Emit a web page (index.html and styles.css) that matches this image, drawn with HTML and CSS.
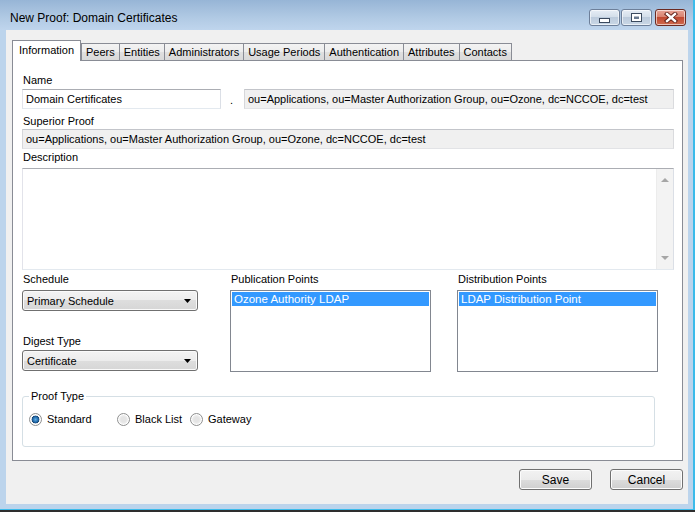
FILE: index.html
```html
<!DOCTYPE html>
<html lang="en">
  <head>
    <meta charset="UTF-8" />
    <meta name="viewport" content="width=device-width, initial-scale=1.0" />
    <title>New Proof: Domain Certificates</title>
    <link rel="stylesheet" href="styles.css">
  </head>
  <body>
    <div class="window">
      <div class="titlebar">
        <span class="title">New Proof: Domain Certificates</span>
        <div class="caption">
          <button class="cap" type="button">
            <svg width="11" height="5" viewBox="0 0 11 5"><rect x="0.5" y="0.5" width="10" height="4" fill="#fff" stroke="#3b4a5e"/></svg>
          </button>
          <button class="cap cap-max" type="button">
            <svg width="11" height="9" viewBox="0 0 11 9"><rect x="0.5" y="0.5" width="10" height="8" fill="#fff" stroke="#3b4a5e"/><rect x="3" y="3.5" width="5" height="2.5" fill="#6a7a90"/></svg>
          </button>
          <button class="cap cap-close" type="button">
            <svg width="14" height="11" viewBox="0 0 14 11"><path d="M3 2 L11 9 M11 2 L3 9" stroke="#5a1a12" stroke-width="4.2" stroke-linecap="square"/><path d="M3 2 L11 9 M11 2 L3 9" stroke="#fff" stroke-width="2.4" stroke-linecap="square"/></svg>
          </button>
        </div>
      </div>

      <div class="client">
        <div class="tabs">
          <div class="tab active">Information</div>
          <div class="tab">Peers</div>
          <div class="tab">Entities</div>
          <div class="tab">Administrators</div>
          <div class="tab">Usage Periods</div>
          <div class="tab">Authentication</div>
          <div class="tab">Attributes</div>
          <div class="tab">Contacts</div>
        </div>

        <div class="panel">
          <div class="lbl">Name</div>
          <div class="name-row">
            <div class="input name-input">Domain Certificates</div>
            <div class="dot">.</div>
            <div class="input readonly">ou=Applications, ou=Master Authorization Group, ou=Ozone, dc=NCCOE, dc=test</div>
          </div>

          <div class="lbl gap-top">Superior Proof</div>
          <div class="input readonly superior">ou=Applications, ou=Master Authorization Group, ou=Ozone, dc=NCCOE, dc=test</div>

          <div class="lbl desc-lbl">Description</div>
          <div class="desc">
            <div class="vscroll">
              <span class="arrow-up"></span>
              <span class="arrow-down"></span>
            </div>
          </div>

          <div class="options">
            <div class="col">
              <div class="lbl">Schedule</div>
              <div class="combo">
                <span>Primary Schedule</span>
                <svg width="8" height="4" viewBox="0 0 8 4"><path d="M0 0 H7 L3.5 4 Z" fill="#000"/></svg>
              </div>
              <div class="lbl digest-lbl">Digest Type</div>
              <div class="combo combo-digest">
                <span>Certificate</span>
                <svg width="8" height="4" viewBox="0 0 8 4"><path d="M0 0 H7 L3.5 4 Z" fill="#000"/></svg>
              </div>
            </div>
            <div class="col">
              <div class="lbl">Publication Points</div>
              <div class="listbox">
                <div class="item selected">Ozone Authority LDAP</div>
              </div>
            </div>
            <div class="col">
              <div class="lbl">Distribution Points</div>
              <div class="listbox">
                <div class="item selected">LDAP Distribution Point</div>
              </div>
            </div>
          </div>

          <fieldset class="group">
            <legend>Proof Type</legend>
            <div class="radios">
              <label class="opt opt-std"><input type="radio" name="ptype" checked /> Standard</label>
              <label class="opt opt-black"><input type="radio" name="ptype" /> Black List</label>
              <label class="opt"><input type="radio" name="ptype" /> Gateway</label>
            </div>
          </fieldset>
        </div>

        <div class="actions">
          <button class="btn" type="button">Save</button>
          <button class="btn" type="button">Cancel</button>
        </div>
      </div>
    </div>
  </body>
</html>
```

FILE: styles.css
```css
body {
  margin: 0;
  background-color: #2e2e2e;
  font-family: "Liberation Sans", Arial, sans-serif;
  font-size: 11px;
  color: #000;
}

.window {
  width: 693px;
  height: 509px;
  background-color: #bcd4ec;
  border-right: 2px solid #3cbbea;
  border-bottom: 1px solid #3cbbea;
}

/* title bar */
.titlebar {
  height: 30px;
  display: flex;
  background: linear-gradient(#97b5d6, #b1cae4 60%, #bfd5ed);
}

.title {
  flex: 1;
  padding: 11px 0 0 10px;
  font-size: 12px;
  line-height: 14px;
}

.caption {
  display: flex;
  margin: 9px 7px 0 0;
}

.cap {
  width: 31px;
  height: 17px;
  padding: 0;
  margin-left: 1px;
  border: 1px solid #6d7f99;
  border-radius: 3px;
  background: linear-gradient(#e6edf5, #d2dde9 50%, #bccbdc 50%, #c9d7e6);
  box-shadow: inset 0 0 0 1px rgba(255, 255, 255, 0.6);
  display: flex;
  align-items: center;
  justify-content: center;
}

.cap:first-child svg {
  margin-top: 5px;
}

.cap-close {
  margin-left: 3px;
  border-color: #6b2a22;
  background: linear-gradient(#e8a597, #d7806d 50%, #c14a32 50%, #cf6a4f);
}

/* client area */
.client {
  margin-left: 6px;
  width: 682px;
  height: 474px;
  box-sizing: border-box;
  padding: 10px 5px 0 6px;
  background-color: #f0f0f0;
}

.tabs {
  display: flex;
  align-items: flex-end;
  height: 20px;
}

.tab {
  height: 17px;
  box-sizing: border-box;
  margin-left: -1px;
  padding: 0 4px;
  border: 1px solid #898c95;
  border-bottom: none;
  line-height: 16px;
  background: linear-gradient(#f3f3f3, #ececec 50%, #e0e0e0 50%, #d9d9d9);
}

.tab.active {
  position: relative;
  z-index: 1;
  height: 21px;
  margin-left: 0;
  margin-right: 1px;
  margin-bottom: -1px;
  padding: 0 6px;
  line-height: 19px;
  background: #fff;
}

.panel {
  height: 401px;
  box-sizing: border-box;
  padding: 13px 8px 0 9px;
  border: 1px solid #898c95;
  background-color: #fff;
}

.lbl {
  line-height: 13px;
  padding-left: 1px;
}

.gap-top {
  margin-top: 6px;
}

.superior {
  margin-top: 1px;
}

.desc-lbl {
  margin-top: 2px;
}

.name-row {
  display: flex;
  height: 20px;
  margin-top: 2px;
}

.input {
  height: 20px;
  box-sizing: border-box;
  padding: 0 3px;
  border: 1px solid;
  border-color: #abadb3 #dbdfe6 #e3e9ef #e2e3ea;
  line-height: 18px;
  white-space: nowrap;
  overflow: hidden;
  background-color: #fff;
}

.name-input {
  width: 199px;
}

.dot {
  width: 23px;
  height: 20px;
  padding: 5px 0 0 9px;
  box-sizing: border-box;
  line-height: 13px;
}

.readonly {
  flex: 1;
  border-color: #c3c5ca #dadbde #e2e3e6 #d6d7da;
  background-color: #f0f0f0;
}

.desc {
  height: 102px;
  margin-top: 4px;
  box-sizing: border-box;
  border: 1px solid;
  border-color: #abadb3 #dbdfe6 #e3e9ef #e2e3ea;
  display: flex;
  justify-content: flex-end;
}

.vscroll {
  width: 17px;
  box-sizing: border-box;
  padding: 9px 0;
  border-left: 1px solid #ececec;
  background-color: #f3f3f3;
  display: flex;
  flex-direction: column;
  justify-content: space-between;
  align-items: center;
}

.arrow-up,
.arrow-down {
  width: 0;
  height: 0;
  border-left: 4px solid transparent;
  border-right: 4px solid transparent;
}

.arrow-up {
  border-bottom: 4px solid #a6a6a6;
}

.arrow-down {
  border-top: 4px solid #a6a6a6;
}

/* schedule, points */
.options {
  display: flex;
  margin-top: 3px;
}

.col:nth-child(1) {
  width: 176px;
  margin-right: 32px;
}

.col:nth-child(2) {
  width: 201px;
  margin-right: 26px;
}

.col:nth-child(3) {
  width: 201px;
}

.combo {
  height: 21px;
  margin-top: 4px;
  box-sizing: border-box;
  padding: 0 4px 0 4px;
  border: 1px solid #707070;
  border-radius: 3px;
  background: linear-gradient(#f3f3f3, #ececec 50%, #dedede 50%, #d6d6d6);
  box-shadow: inset 0 0 0 1px #fafafa;
  display: flex;
  align-items: center;
  justify-content: space-between;
}

.combo svg {
  margin-right: 1px;
}

.digest-lbl {
  margin-top: 24px;
}

.combo-digest {
  margin-top: 2px;
}

.listbox {
  height: 82px;
  margin-top: 4px;
  box-sizing: border-box;
  padding: 1px;
  border: 1px solid #828790;
  background-color: #fff;
}

.item {
  height: 14px;
  padding-left: 2px;
  line-height: 14px;
  font-size: 11.5px;
}

.item.selected {
  background-color: #3399ff;
  color: #fff;
}

/* proof type */
.group {
  width: 633px;
  margin: 18px 0 0 0;
  padding: 0 0 20px 6px;
  box-sizing: border-box;
  border: 1px solid #d5dfe5;
  border-radius: 3px;
}

.group legend {
  padding: 0 2px;
  line-height: 13px;
}

.radios {
  display: flex;
  margin-top: 10px;
  height: 13px;
}

.opt {
  display: flex;
  align-items: center;
  gap: 5px;
  line-height: 13px;
}

.opt-std {
  width: 88px;
}

.opt-black {
  width: 73px;
}

.opt input {
  appearance: none;
  width: 13px;
  height: 13px;
  margin: 0;
  border: 1px solid #8e8f8f;
  border-radius: 50%;
  background: radial-gradient(circle, #e4e4e4 30%, #f4f4f4 70%);
  box-shadow: inset 0 0 0 1px #fff;
}

.opt input:checked {
  background: radial-gradient(circle, #5fb0e8 0, #1c5f9e 3px, #17446f 3.6px, #f4f4f4 4.2px);
}

/* buttons */
.actions {
  display: flex;
  justify-content: flex-end;
  gap: 18px;
  margin-top: 8px;
}

.btn {
  width: 73px;
  height: 21px;
  padding: 0;
  border: 1px solid #707070;
  border-radius: 3px;
  font-family: inherit;
  font-size: 12px;
  background: linear-gradient(#f2f2f2, #ebebeb 50%, #dddddd 50%, #cfcfcf);
  box-shadow: inset 0 0 0 1px #fcfcfc;
}
```
